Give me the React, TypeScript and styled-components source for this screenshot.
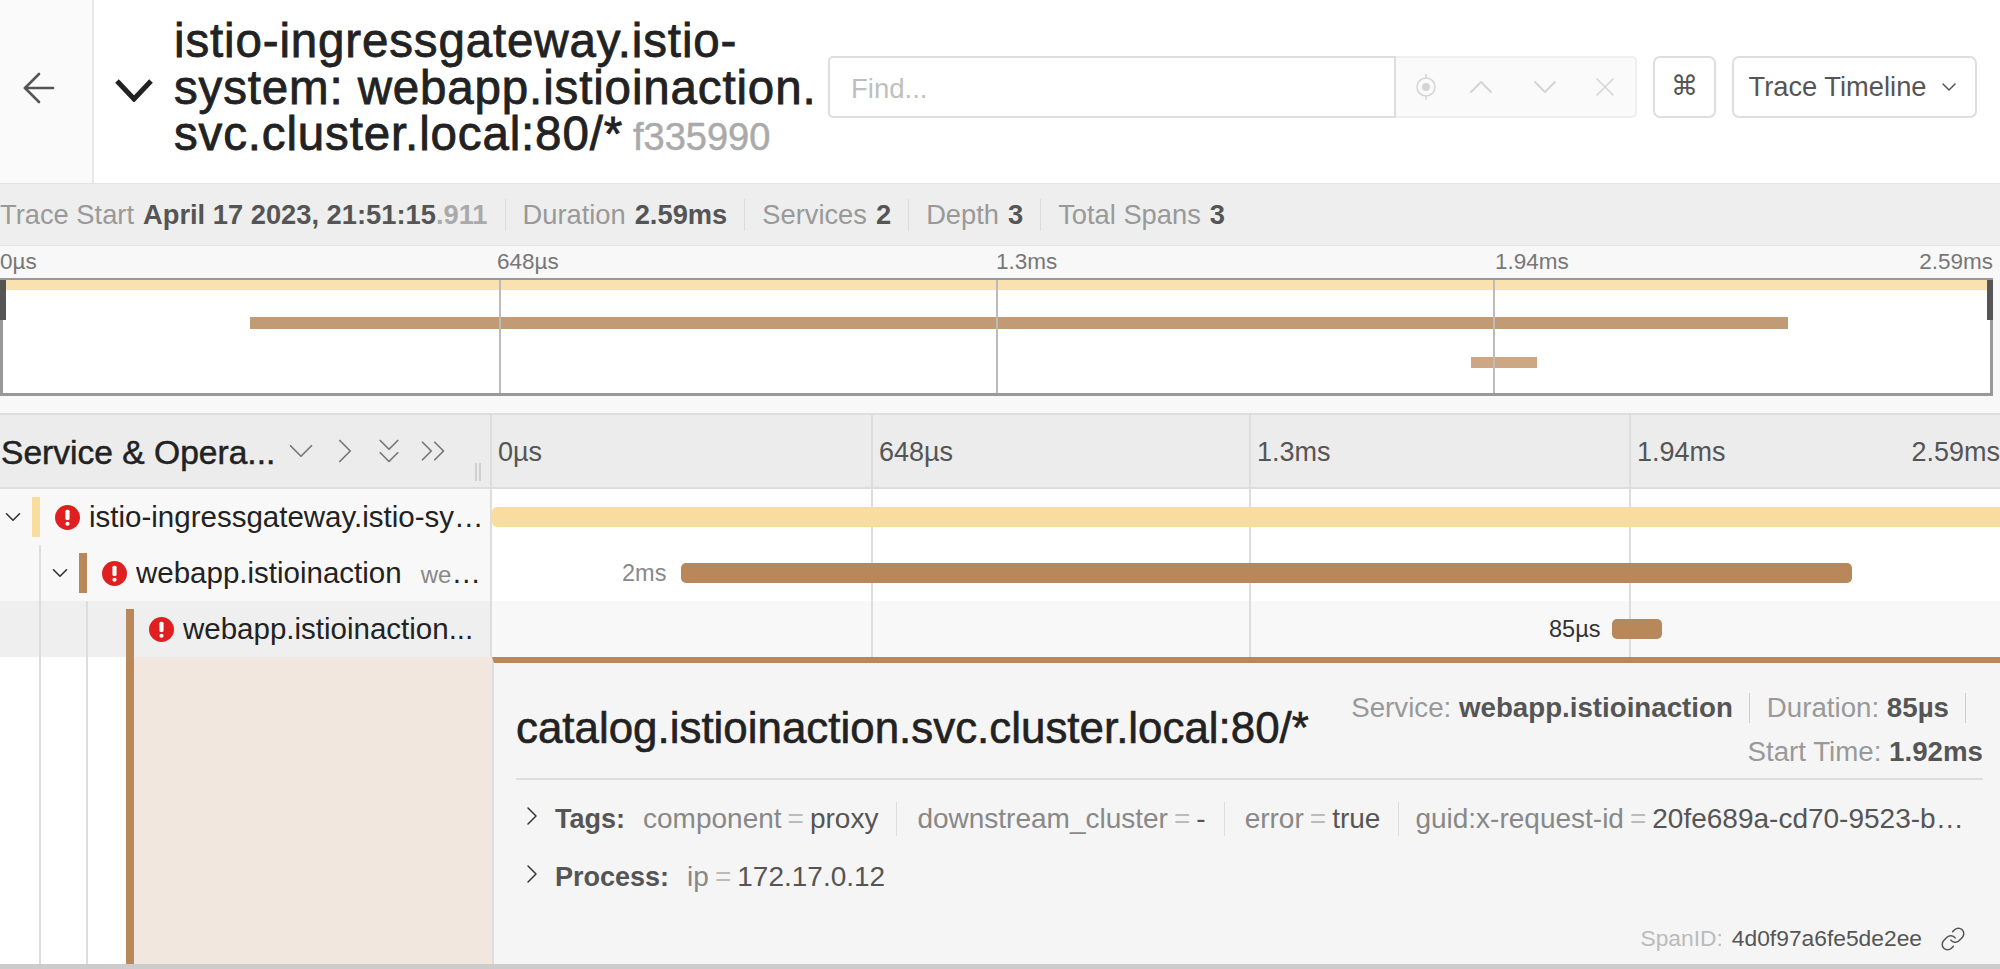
import * as React from "react";
import styled, { createGlobalStyle } from "styled-components";
import {
  ArrowLeft,
  ChevronDown,
  ChevronRight,
  ChevronUp,
  ChevronsDown,
  ChevronsRight,
  Link,
  X,
} from "lucide-react";

const GlobalStyle = createGlobalStyle`
  html, body {
    margin: 0;
    padding: 0;
    background: #fff;
    overflow: hidden;
  }
  body {
    font-family: "Liberation Sans", Arial, sans-serif;
    color: #333;
  }
`;

const Page = styled.div`
  width: 2000px;
  height: 969px;
  overflow: hidden;
  display: flex;
  flex-direction: column;
`;

/* top header */
const Header = styled.header`
  height: 183px;
  display: flex;
  align-items: stretch;
  flex: none;
`;

const BackCol = styled.div`
  width: 92px;
  flex: none;
  background: #fafafa;
  border-right: 2px solid #e8e8e8;
  display: flex;
  align-items: center;
  justify-content: center;
  color: #555;
`;

const BackIcon = styled(ArrowLeft)`
  margin: 0 15px 8px 0;
`;

const TitleBlock = styled.div`
  width: 734px;
  flex: none;
  display: flex;
  align-items: center;
  padding-left: 21px;
  box-sizing: border-box;
  gap: 21px;
`;

const TitleChevron = styled.svg`
  width: 38px;
  height: 24px;
  flex: none;
  fill: none;
  stroke: #222;
  stroke-width: 5;
  margin-top: -4px;
`;

const Title = styled.h1`
  margin: 0;
  margin-top: -4px;
  font-size: 47.5px;
  letter-spacing: 0.85px;
  line-height: 46.5px;
  font-weight: 400;
  color: #222;
  white-space: nowrap;
  -webkit-text-stroke: 0.8px #222;
`;

const TraceId = styled.small`
  font-size: 38px;
  letter-spacing: 0;
  color: #aaa;
  margin-left: 10px;
  -webkit-text-stroke: 0.5px #aaa;
`;

const Tools = styled.div`
  display: flex;
  align-items: center;
  gap: 16px;
  padding-bottom: 9px;
`;

const FindGroup = styled.div`
  display: flex;
  height: 62px;
`;

const FindInput = styled.div`
  width: 568px;
  box-sizing: border-box;
  border: 2px solid #dedede;
  border-radius: 5px 0 0 5px;
  padding: 3px 0 0 21px;
  font-size: 27.5px;
  color: #bfbfbf;
  display: flex;
  align-items: center;
`;

const FindActions = styled.div`
  width: 241px;
  box-sizing: border-box;
  background: #fafafa;
  border: 2px solid #efefef;
  border-left: none;
  border-radius: 0 5px 5px 0;
  display: flex;
  align-items: center;
  justify-content: space-between;
  padding: 0 14px 0 19px;
  color: #d4d4d4;
`;

const ToolButton = styled.div<{ $width: number }>`
  width: ${(p) => p.$width}px;
  height: 62px;
  box-sizing: border-box;
  border: 2px solid #dedede;
  border-radius: 7px;
  display: flex;
  align-items: center;
  justify-content: center;
  gap: 10px;
  font-size: 27.3px;
  color: #555;
`;

const CommandGlyph = styled.span`
  font-family: "DejaVu Sans", sans-serif;
  font-size: 27px;
  margin-top: -4px;
`;

/* trace summary */
const InfoBar = styled.div`
  height: 61px;
  flex: none;
  background: #eee;
  border-top: 1px solid #e4e4e4;
  border-bottom: 1px solid #e4e4e4;
  display: flex;
  align-items: center;
  font-size: 27.3px;
  color: #999;
  white-space: nowrap;
`;

const InfoItem = styled.span`
  display: inline-flex;
  align-items: center;
  height: 32px;
  padding: 0 17px;
  border-left: 1px solid #ddd;
  &:first-child {
    border-left: none;
    padding-left: 0;
  }
`;

const InfoValue = styled.b`
  color: #555;
  margin-left: 9px;
`;

const Millis = styled.span`
  color: #aaa;
`;

/* minimap */
const Minimap = styled.div`
  height: 167px;
  flex: none;
  background: #f8f8f8;
  box-sizing: border-box;
  padding-right: 7px;
`;

const MiniTicks = styled.div`
  height: 32px;
  display: grid;
  grid-template-columns: 497px 499px 499px 1fr;
  font-size: 22.5px;
  color: #777;
  align-items: center;
`;

const LastCell = styled.span`
  display: flex;
  justify-content: space-between;
`;

const MiniCanvas = styled.div`
  position: relative;
  height: 118px;
  box-sizing: border-box;
  background: #fff;
  border: 2px solid #999;
  border-width: 2px 3px 3px 3px;
`;

const MiniBar = styled.div<{ $color: string; $top: number; $height: number }>`
  position: absolute;
  top: ${(p) => p.$top}px;
  height: ${(p) => p.$height}px;
  background: ${(p) => p.$color};
`;

const MiniLine = styled.div`
  position: absolute;
  top: 0;
  bottom: 0;
  width: 2px;
  background: #bbb;
`;

const MiniHandle = styled.div<{ $side: "left" | "right" }>`
  position: absolute;
  top: 0;
  ${(p) => p.$side}: -3px;
  width: 6px;
  height: 40px;
  background: #555;
`;

/* gantt */
const GanttHead = styled.div`
  height: 76px;
  box-sizing: border-box;
  flex: none;
  display: grid;
  grid-template-columns: 492px 1fr;
  background: #ececec;
  border-top: 2px solid #ddd;
  border-bottom: 2px solid #ddd;
`;

const HeadLeft = styled.div`
  position: relative;
  display: flex;
  align-items: center;
  border-right: 2px solid #ddd;
  color: #777;
`;

const HeadTitle = styled.div`
  font-size: 33.6px;
  color: #222;
  -webkit-text-stroke: 0.5px #222;
  margin: 3px 0 0 1px;
  width: 279px;
  flex: none;
  white-space: nowrap;
`;

const HeadIcons = styled.div`
  display: flex;
  align-items: center;
  gap: 2px;
  margin-top: -1px;
`;

const DragHandle = styled.div`
  position: absolute;
  right: 9px;
  bottom: 6px;
  width: 6px;
  height: 18px;
  border-left: 2px solid #d0d0d0;
  border-right: 2px solid #d0d0d0;
  box-sizing: border-box;
`;

const TickGrid = styled.div`
  display: grid;
  grid-template-columns: 379px 378px 380px 1fr;
  height: 100%;
`;

const HeadTick = styled.div<{ $first?: boolean }>`
  display: flex;
  align-items: center;
  justify-content: space-between;
  padding: 3px 0 0 6px;
  font-size: 27px;
  color: #555;
  white-space: nowrap;
  border-left: ${(p) => (p.$first ? "none" : "2px solid #ddd")};
`;

const Row = styled.div<{ $active?: boolean }>`
  height: 56px;
  flex: none;
  display: grid;
  grid-template-columns: 492px 1fr;
  background: ${(p) => (p.$active ? "#f8f8f8" : "#fff")};
`;

const RowLeft = styled.div<{ $active?: boolean }>`
  display: flex;
  background: ${(p) => (p.$active ? "#efefef" : "#f8f8f8")};
  border-right: 2px solid #ddd;
  box-sizing: border-box;
  min-width: 0;
`;

const Indent = styled.div`
  width: 47px;
  flex: none;
  box-sizing: border-box;
  border-right: 2px solid #ddd;
  position: relative;
  left: -6px;
`;

const Toggle = styled.div`
  width: 32px;
  flex: none;
  display: flex;
  align-items: center;
  padding-left: 0;
  box-sizing: border-box;
  color: #333;
`;

const Marker = styled.div<{ $color: string; $open?: boolean; $full?: boolean }>`
  width: 8px;
  flex: none;
  background: ${(p) => p.$color};
  margin: ${(p) => (p.$full ? "0" : p.$open ? "8px 0 0" : "8px 0")};
`;

const SpanName = styled.div`
  flex: 1;
  min-width: 0;
  display: flex;
  align-items: center;
  gap: 9px;
  padding: 0 2px 0 15px;
  font-size: 29.5px;
  color: #222;
`;

const SpanText = styled.span`
  overflow: hidden;
  text-overflow: ellipsis;
  white-space: nowrap;
  min-width: 0;
`;

const SpanOp = styled.small`
  font-size: 24px;
  color: #888;
  margin-left: 19px;
`;

const ErrorIcon = styled.svg`
  width: 25px;
  height: 25px;
  flex: none;
`;

const RowRight = styled.div`
  position: relative;
  overflow: hidden;
`;

const RowTick = styled.div<{ $first?: boolean }>`
  border-left: ${(p) => (p.$first ? "none" : "2px solid #ddd")};
`;

const Bar = styled.div<{ $color: string }>`
  position: absolute;
  top: 18px;
  height: 20px;
  background: ${(p) => p.$color};
  border-radius: 5px;
`;

const BarLabel = styled.span<{ $dark?: boolean }>`
  position: absolute;
  top: 15px;
  font-size: 23.5px;
  color: ${(p) => (p.$dark ? "#333" : "#888")};
`;

/* opened span */
const DetailRow = styled.div`
  flex: 1;
  min-height: 0;
  display: grid;
  grid-template-columns: 492px 1fr;
  border-bottom: 5px solid #ccc;
`;

const DetailLeft = styled.div`
  display: flex;
  background: #fff;
`;

const DetailTint = styled.div`
  flex: 1;
  background: #f1e7de;
`;

const Detail = styled.div<{ $color: string }>`
  background: #f5f5f5;
  border-top: 6px solid ${(p) => p.$color};
  border-left: 2px solid #ddd;
  padding: 0 17px 0 22px;
  min-width: 0;
  display: flex;
  flex-direction: column;
`;

const DetailHead = styled.div`
  height: 117px;
  flex: none;
  box-sizing: border-box;
  padding-top: 18px;
  display: flex;
  align-items: center;
  justify-content: space-between;
  border-bottom: 2px solid #ddd;
`;

const DetailTitle = styled.h2`
  margin: -4px 0 0;
  font-size: 43.9px;
  font-weight: 400;
  color: #222;
  -webkit-text-stroke: 0.6px #222;
  white-space: nowrap;
`;

const Overview = styled.div`
  width: 640px;
  text-align: right;
  font-size: 27.7px;
  line-height: 44px;
  color: #999;
`;

const OverviewItem = styled.span`
  display: inline-block;
  line-height: 30px;
  padding-right: 16px;
  margin-right: 17px;
  border-right: 1px solid #ccc;
  &:last-child {
    border-right: none;
    padding-right: 0;
    margin-right: 0;
  }
`;

const OverviewValue = styled.b`
  color: #555;
`;

const KvRow = styled.div<{ $top: number }>`
  display: flex;
  align-items: center;
  margin-top: ${(p) => p.$top}px;
  font-size: 28px;
  color: #555;
  white-space: nowrap;
  min-width: 0;
`;

const KvChevron = styled.div`
  width: 39px;
  height: 32px;
  flex: none;
  margin-top: -6px;
  color: #333;
`;

const KvLabel = styled.b`
  color: #555;
  font-size: 27px;
  margin-right: 18px;
`;

const KvItem = styled.span`
  display: inline-block;
  padding: 0 18px 0 0;
  margin-right: 20px;
  border-right: 1px solid #ddd;
  line-height: 34px;
  &:last-child {
    border-right: none;
    margin: 0 0 0 -4px;
    padding-right: 0;
    overflow: hidden;
    text-overflow: ellipsis;
    width: 558px;
  }
`;

const KvKey = styled.span`
  color: #888;
`;

const KvEq = styled.span`
  color: #bbb;
  margin: 0 6px;
`;

const ProcessItem = styled.span`
  line-height: 34px;
`;

const DetailFoot = styled.div`
  margin-top: auto;
  margin-bottom: 12px;
  display: flex;
  justify-content: flex-end;
  align-items: center;
  padding-right: 17px;
  font-size: 22.8px;
  color: #bbb;
  gap: 9px;
`;

const FootId = styled.span`
  color: #555;
  margin-right: 9px;
`;

const ErrorBadge = () => (
  <ErrorIcon viewBox="0 0 24 24">
    <circle cx="12" cy="12" r="12" fill="#e02020" />
    <rect x="10" y="4.5" width="4" height="10" rx="1.6" fill="#fff" />
    <circle cx="12" cy="18" r="2" fill="#fff" />
  </ErrorIcon>
);

const TargetIcon = () => (
  <svg width="22" height="30" viewBox="0 0 22 30" fill="none" stroke="currentColor" strokeWidth="1.5">
    <circle cx="11" cy="15" r="9" />
    <circle cx="11" cy="15" r="4" fill="currentColor" stroke="none" />
    <path d="M11 2v4M11 24v4" />
  </svg>
);

const miniBars = [
  { start: 0, end: 1, color: "#f9e1b0", top: 0, height: 10 },
  { start: 0.1245, end: 0.8985, color: "#c19a76", top: 37, height: 12 },
  { start: 0.739, end: 0.772, color: "#cda684", top: 77, height: 11 },
];

const miniLines = [0.2495, 0.4995, 0.75];

const rows = [
  { level: 0, color: "#f9dd9f", name: "istio-ingressgateway.istio-system", toggle: true },
  { level: 1, color: "#b8875a", name: "webapp.istioinaction", op: "webapp.istioinaction", toggle: true },
  { level: 2, color: "#b8875a", name: "webapp.istioinaction...", active: true, open: true },
];

const headTicks = ["0µs", "648µs", "1.3ms"];

const tags = [
  ["component", "proxy"],
  ["downstream_cluster", "-"],
  ["error", "true"],
  ["guid:x-request-id", "20fe689a-cd70-9523-b8e5-5d1a5c3f29d7"],
];

const RowTicks = () => (
  <TickGrid>
    <RowTick $first />
    <RowTick />
    <RowTick />
    <RowTick />
  </TickGrid>
);

export default function App() {
  return (
    <Page>
      <GlobalStyle />
      <Header>
        <BackCol>
          <BackIcon size={48} strokeWidth={1.3} />
        </BackCol>
        <TitleBlock>
          <TitleChevron viewBox="0 0 38 24">
            <path d="M2 3 L19 21 L36 3" />
          </TitleChevron>
          <Title>
            istio-ingressgateway.istio-
            <br />
            system: webapp.istioinaction.
            <br />
            svc.cluster.local:80/*
            <TraceId>f335990</TraceId>
          </Title>
        </TitleBlock>
        <Tools>
          <FindGroup>
            <FindInput>Find...</FindInput>
            <FindActions>
              <TargetIcon />
              <ChevronUp size={40} strokeWidth={1.1} />
              <ChevronDown size={40} strokeWidth={1.1} />
              <X size={32} strokeWidth={1.1} />
            </FindActions>
          </FindGroup>
          <ToolButton $width={63}>
            <CommandGlyph>⌘</CommandGlyph>
          </ToolButton>
          <ToolButton $width={245}>
            Trace Timeline
            <ChevronDown size={24} strokeWidth={1.5} />
          </ToolButton>
        </Tools>
      </Header>

      <InfoBar>
        <InfoItem>
          Trace Start
          <InfoValue>
            April 17 2023, 21:51:15<Millis>.911</Millis>
          </InfoValue>
        </InfoItem>
        <InfoItem>
          Duration<InfoValue>2.59ms</InfoValue>
        </InfoItem>
        <InfoItem>
          Services<InfoValue>2</InfoValue>
        </InfoItem>
        <InfoItem>
          Depth<InfoValue>3</InfoValue>
        </InfoItem>
        <InfoItem>
          Total Spans<InfoValue>3</InfoValue>
        </InfoItem>
      </InfoBar>

      <Minimap>
        <MiniTicks>
          <span>0µs</span>
          <span>648µs</span>
          <span>1.3ms</span>
          <LastCell>
            <span>1.94ms</span>
            <span>2.59ms</span>
          </LastCell>
        </MiniTicks>
        <MiniCanvas>
          {miniBars.map((b) => (
            <MiniBar
              key={b.top}
              $color={b.color}
              $top={b.top}
              $height={b.height}
              style={{ left: `${b.start * 100}%`, width: `${(b.end - b.start) * 100}%` }}
            />
          ))}
          {miniLines.map((l) => (
            <MiniLine key={l} style={{ left: `${l * 100}%` }} />
          ))}
          <MiniHandle $side="left" />
          <MiniHandle $side="right" />
        </MiniCanvas>
      </Minimap>

      <GanttHead>
        <HeadLeft>
          <HeadTitle>Service &amp; Opera...</HeadTitle>
          <HeadIcons>
            <ChevronDown size={42} strokeWidth={1} />
            <ChevronRight size={42} strokeWidth={1} />
            <ChevronsDown size={42} strokeWidth={1} />
            <ChevronsRight size={42} strokeWidth={1} />
          </HeadIcons>
          <DragHandle />
        </HeadLeft>
        <TickGrid>
          {headTicks.map((t, i) => (
            <HeadTick key={t} $first={i === 0}>
              {t}
            </HeadTick>
          ))}
          <HeadTick>
            1.94ms
            <span>2.59ms</span>
          </HeadTick>
        </TickGrid>
      </GanttHead>

      {rows.map((r) => (
        <Row key={r.level} $active={r.active}>
          <RowLeft $active={r.active}>
            {Array.from({ length: r.level }).map((_, i) => (
              <Indent key={i} />
            ))}
            <Toggle>{r.toggle && <ChevronDown size={26} strokeWidth={1.5} />}</Toggle>
            <Marker $color={r.color} $open={r.open} />
            <SpanName>
              <ErrorBadge />
              <SpanText>
                {r.name}
                {r.op && <SpanOp>{r.op}</SpanOp>}
              </SpanText>
            </SpanName>
          </RowLeft>
          <RowRight>
            <RowTicks />
            {r.level === 0 && <Bar $color="#f9dd9f" style={{ left: 0, right: -10 }} />}
            {r.level === 1 && (
              <>
                <BarLabel style={{ left: 130 }}>2ms</BarLabel>
                <Bar $color="#b8875a" style={{ left: 189, width: 1171 }} />
              </>
            )}
            {r.level === 2 && (
              <>
                <BarLabel $dark style={{ left: 1057 }}>
                  85µs
                </BarLabel>
                <Bar $color="#b8875a" style={{ left: 1120, width: 50 }} />
              </>
            )}
          </RowRight>
        </Row>
      ))}

      <DetailRow>
        <DetailLeft>
          <Indent />
          <Indent />
          <Toggle />
          <Marker $color="#b8875a" $full />
          <DetailTint />
        </DetailLeft>
        <Detail $color="#b8875a">
          <DetailHead>
            <DetailTitle>catalog.istioinaction.svc.cluster.local:80/*</DetailTitle>
            <Overview>
              <OverviewItem>
                Service: <OverviewValue>webapp.istioinaction</OverviewValue>
              </OverviewItem>
              <OverviewItem>
                Duration: <OverviewValue>85µs</OverviewValue>
              </OverviewItem>
              <OverviewItem>
                Start Time: <OverviewValue>1.92ms</OverviewValue>
              </OverviewItem>
            </Overview>
          </DetailHead>
          <KvRow $top={22}>
            <KvChevron>
              <ChevronRight size={32} strokeWidth={1.1} />
            </KvChevron>
            <KvLabel>Tags:</KvLabel>
            {tags.map(([k, v]) => (
              <KvItem key={k}>
                <KvKey>{k}</KvKey>
                <KvEq>=</KvEq>
                {v}
              </KvItem>
            ))}
          </KvRow>
          <KvRow $top={24}>
            <KvChevron>
              <ChevronRight size={32} strokeWidth={1.1} />
            </KvChevron>
            <KvLabel>Process:</KvLabel>
            <ProcessItem>
              <KvKey>ip</KvKey>
              <KvEq>=</KvEq>
              172.17.0.12
            </ProcessItem>
          </KvRow>
          <DetailFoot>
            SpanID:
            <FootId>4d0f97a6fe5de2ee</FootId>
            <Link size={26} strokeWidth={1.4} color="#555" />
          </DetailFoot>
        </Detail>
      </DetailRow>
    </Page>
  );
}
